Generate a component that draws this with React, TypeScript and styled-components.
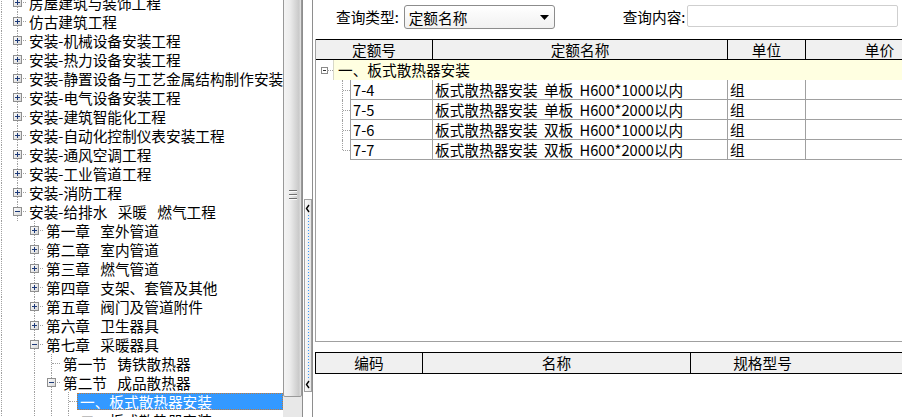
import React from 'react'
import styled, { createGlobalStyle, css } from 'styled-components'

const GlobalStyle = createGlobalStyle`
  html, body {
    margin: 0;
    padding: 0;
    background: #fff;
  }
  body {
    width: 902px;
    height: 417px;
    overflow: hidden;
    font-family: "Noto Sans CJK SC", "Liberation Sans", sans-serif;
    font-size: 14.67px;
    color: #000;
  }
`

const Window = styled.div`
  display: flex;
  width: 902px;
  height: 417px;
  overflow: hidden;
  background: #fff;
`

/* ---------- left tree ---------- */

const TreePane = styled.div`
  display: flex;
  flex: none;
  width: 302px;
  border-right: 1px solid #8e8e8e;
`

const TreeView = styled.div`
  flex: none;
  width: 283px;
  overflow: hidden;
  padding-top: 0;
`

const TreeList = styled.div`
  margin-top: -7px;
`

const TreeRow = styled.div`
  display: flex;
  height: 19px;
  white-space: nowrap;
`

const RootGuide = styled.span`
  position: relative;
  flex: none;
  width: 9px;
  &::before {
    content: '';
    position: absolute;
    left: 1px;
    top: 0;
    bottom: 0;
    border-left: 1px dotted #a0a0a0;
  }
`

const Guide = styled.span<{ $line?: boolean }>`
  position: relative;
  flex: none;
  width: 17px;
  ${({ $line }) => $line && css`
    &::before {
      content: '';
      position: absolute;
      left: 8px;
      top: 0;
      bottom: 0;
      border-left: 1px dotted #a0a0a0;
    }
  `}
`

const Connector = styled.span<{ $up?: boolean; $down?: boolean }>`
  position: relative;
  flex: none;
  width: 17px;
  &::before {
    content: '';
    position: absolute;
    left: 8px;
    top: ${({ $up }) => ($up ? '0' : '9px')};
    bottom: ${({ $down }) => ($down ? '0' : '10px')};
    border-left: 1px dotted #a0a0a0;
  }
  &::after {
    content: '';
    position: absolute;
    left: 9px;
    right: 0;
    top: 9px;
    border-top: 1px dotted #a0a0a0;
  }
`

const ExpandBox = styled.svg`
  position: absolute;
  left: 4px;
  top: 5px;
  z-index: 1;
`

const TreeLabel = styled.span<{ $selected?: boolean }>`
  flex: 1;
  height: 17px;
  margin-top: 1px;
  padding: 0 2px;
  margin-left: 1px;
  line-height: 17px;
  word-spacing: 7px;
  box-sizing: border-box;
  ${({ $selected }) => $selected && css`
    margin-left: 0;
    padding-left: 3px;
    background: #3399ff;
    color: #fff;
    outline: 1px dotted #c27a3a;
    outline-offset: -1px;
  `}
`

/* ---------- scroll bar ---------- */

const ScrollBar = styled.div`
  flex: none;
  width: 19px;
  display: flex;
  flex-direction: column;
  background: #e8e8e8;
  overflow: hidden;
`

const Thumb = styled.div`
  flex: none;
  height: 405px;
  margin-top: -8px;
  box-sizing: border-box;
  border: 1px solid #999;
  border-radius: 2px;
  background: linear-gradient(to right, #f4f4f4 0%, #ececec 35%, #d8d8d8 65%, #c9c9c9 88%, #e6e6e6 100%);
  display: flex;
  flex-direction: column;
  justify-content: center;
  align-items: center;
  gap: 2px;
`

const GripLine = styled.span`
  display: block;
  width: 8px;
  height: 2px;
  border-top: 1px solid #6f6f6f;
  border-bottom: 1px solid #fafafa;
  box-sizing: border-box;
`

/* ---------- splitter ---------- */

const Splitter = styled.div`
  flex: none;
  width: 9px;
  display: flex;
  flex-direction: column;
`

const SplitHandle = styled.div`
  margin: 199px 0 0 1px;
  width: 8px;
  height: 193px;
  box-sizing: border-box;
  border: 1px solid #a0a0a0;
  background: linear-gradient(to right, #fafafa, #e6e6e6);
`

/* ---------- right pane ---------- */

const RightPane = styled.div`
  flex: 1;
  min-width: 0;
  border-left: 1px solid #8e8e8e;
  display: flex;
  flex-direction: column;
  overflow: hidden;
`

const Toolbar = styled.div`
  flex: none;
  height: 34px;
  display: flex;
  align-items: center;
`

const FieldLabel = styled.span<{ $gap: number }>`
  margin-left: ${({ $gap }) => $gap}px;
  line-height: 20px;
  white-space: nowrap;
`

const Combo = styled.div`
  flex: none;
  width: 151px;
  height: 24px;
  margin-left: 5px;
  box-sizing: border-box;
  border: 1px solid #8c8c8c;
  border-radius: 3px;
  background: linear-gradient(#ffffff, #f1f1f1);
  display: flex;
  align-items: center;
  justify-content: space-between;
  padding: 0 5px 0 4px;
`

const SearchInput = styled.div`
  flex: none;
  width: 211px;
  height: 22px;
  margin: -2px 0 0 2px;
  box-sizing: border-box;
  border: 1px solid #cfcfcf;
  border-radius: 2px;
  background: #fff;
`

const Grid = styled.div<{ $height?: number; $framed?: boolean }>`
  margin-left: 2px;
  display: flex;
  flex-direction: column;
  overflow: hidden;
  ${({ $height }) => ($height ? css`flex: none; height: ${$height}px;` : css`flex: 1;`)}
  ${({ $framed }) => $framed && css`
    border-left: 1px solid #a0a0a0;
    border-bottom: 1px solid #a0a0a0;
  `}
  box-sizing: border-box;
`

const HeaderRow = styled.div<{ $height: number; $shift?: boolean }>`
  flex: none;
  display: flex;
  height: ${({ $height }) => $height}px;
  box-sizing: border-box;
  margin-left: ${({ $shift }) => ($shift ? '-1px' : '0')};
  border-top: 1px solid #000;
  border-bottom: 1px solid #000;
  border-left: 1px solid #000;
  background: #f0f0f0;
`

const HeadCell = styled.div<{ $w: number; $pr?: number }>`
  flex: none;
  width: ${({ $w }) => $w}px;
  box-sizing: border-box;
  border-right: 1px solid #000;
  padding-right: ${({ $pr }) => $pr ?? 0}px;
  text-align: center;
  line-height: 19px;
  white-space: nowrap;
`

const GroupRow = styled.div`
  flex: none;
  display: flex;
  height: 20px;
`

const GroupLead = styled.div`
  position: relative;
  flex: none;
  width: 17px;
  &::after {
    content: '';
    position: absolute;
    left: 11px;
    right: 0;
    top: 10px;
    border-top: 1px dotted #a0a0a0;
  }
`

const SmallBox = styled.svg`
  position: absolute;
  left: 5px;
  top: 7px;
`

const GroupCell = styled.div`
  flex: 1;
  background: #ffffe1;
  border-left: 1px solid #d8d8c8;
  padding-left: 4px;
  line-height: 19px;
  white-space: nowrap;
`

const DataRow = styled.div`
  flex: none;
  display: flex;
  height: 20px;
`

const RowLead = styled.div<{ $last?: boolean }>`
  position: relative;
  flex: none;
  width: 34px;
  &::before {
    content: '';
    position: absolute;
    left: 26px;
    top: 0;
    bottom: ${({ $last }) => ($last ? '10px' : '0')};
    border-left: 1px dotted #a0a0a0;
  }
  &::after {
    content: '';
    position: absolute;
    left: 27px;
    right: 0;
    top: 10px;
    border-top: 1px dotted #a0a0a0;
  }
`

const DataCell = styled.div<{ $w: number; $first?: boolean }>`
  flex: none;
  width: ${({ $w }) => $w}px;
  box-sizing: border-box;
  border-right: 1px solid #a0a0a0;
  border-bottom: 1px solid #a0a0a0;
  ${({ $first }) => $first && css`border-left: 1px solid #a0a0a0;`}
  padding-left: 2px;
  line-height: 19px;
  white-space: nowrap;
  word-spacing: 3px;
  overflow: hidden;
`

const GridGap = styled.div`
  flex: none;
  height: 10px;
`

/* ---------- data ---------- */

type TreeItem = {
  level: number
  text: string
  box?: '+' | '-'
  selected?: boolean
}

const TREE: TreeItem[] = [
  { level: 0, text: '房屋建筑与装饰工程', box: '+' },
  { level: 0, text: '仿古建筑工程', box: '+' },
  { level: 0, text: '安装-机械设备安装工程', box: '+' },
  { level: 0, text: '安装-热力设备安装工程', box: '+' },
  { level: 0, text: '安装-静置设备与工艺金属结构制作安装工程', box: '+' },
  { level: 0, text: '安装-电气设备安装工程', box: '+' },
  { level: 0, text: '安装-建筑智能化工程', box: '+' },
  { level: 0, text: '安装-自动化控制仪表安装工程', box: '+' },
  { level: 0, text: '安装-通风空调工程', box: '+' },
  { level: 0, text: '安装-工业管道工程', box: '+' },
  { level: 0, text: '安装-消防工程', box: '+' },
  { level: 0, text: '安装-给排水 采暖 燃气工程', box: '-' },
  { level: 1, text: '第一章 室外管道', box: '+' },
  { level: 1, text: '第二章 室内管道', box: '+' },
  { level: 1, text: '第三章 燃气管道', box: '+' },
  { level: 1, text: '第四章 支架、套管及其他', box: '+' },
  { level: 1, text: '第五章 阀门及管道附件', box: '+' },
  { level: 1, text: '第六章 卫生器具', box: '+' },
  { level: 1, text: '第七章 采暖器具', box: '-' },
  { level: 2, text: '第一节 铸铁散热器' },
  { level: 2, text: '第二节 成品散热器', box: '-' },
  { level: 3, text: '一、板式散热器安装', selected: true },
  { level: 3, text: '二、板式散热器安装' },
]

const ITEMS = [
  { code: '7-4', name: '板式散热器安装 单板 H600*1000以内', unit: '组' },
  { code: '7-5', name: '板式散热器安装 单板 H600*2000以内', unit: '组' },
  { code: '7-6', name: '板式散热器安装 双板 H600*1000以内', unit: '组' },
  { code: '7-7', name: '板式散热器安装 双板 H600*2000以内', unit: '组' },
]

/* ---------- drawings ---------- */

const PlusMinus = ({ sign }: { sign: '+' | '-' }) => (
  <ExpandBox width="9" height="9" viewBox="0 0 9 9">
    <defs>
      <linearGradient id="boxfill" x1="0" y1="0" x2="1" y2="1">
        <stop offset="0" stopColor="#ffffff" />
        <stop offset="1" stopColor="#d6d6d6" />
      </linearGradient>
    </defs>
    <rect x="0.5" y="0.5" width="8" height="8" fill="url(#boxfill)" stroke="#8f8f8f" />
    <line x1="2" y1="4.5" x2="7" y2="4.5" stroke="#1d3a78" />
    {sign === '+' && <line x1="4.5" y1="2" x2="4.5" y2="7" stroke="#1d3a78" />}
  </ExpandBox>
)

const HandleArt = () => (
  <svg width="6" height="191" viewBox="0 0 6 191">
    <polyline points="4,5 1.5,8.5 4,12" fill="none" stroke="#000" strokeWidth="1.4" />
    <line x1="3.5" y1="15" x2="3.5" y2="178" stroke="#3399ff" strokeWidth="1" strokeDasharray="1 2" />
    <polyline points="4,181 1.5,184.5 4,188" fill="none" stroke="#000" strokeWidth="1.4" />
  </svg>
)

const DropArrow = () => (
  <svg width="9" height="5" viewBox="0 0 9 5">
    <polygon points="0,0 9,0 4.5,5" fill="#000" />
  </svg>
)

/* ---------- parts ---------- */

const TreeNode = ({ item }: { item: TreeItem }) => (
  <TreeRow>
    <RootGuide />
    {Array.from({ length: item.level }, (_, i) => (
      <Guide key={i} $line={i > 0} />
    ))}
    <Connector $up $down>
      {item.box && <PlusMinus sign={item.box} />}
    </Connector>
    <TreeLabel $selected={item.selected}>{item.text}</TreeLabel>
  </TreeRow>
)

const QuotaGrid = () => (
  <Grid $height={303} $framed>
    <HeaderRow $height={21} $shift>
      <HeadCell $w={117}>定额号</HeadCell>
      <HeadCell $w={295}>定额名称</HeadCell>
      <HeadCell $w={78}>单位</HeadCell>
      <HeadCell $w={148}>单价</HeadCell>
    </HeaderRow>
    <GroupRow>
      <GroupLead>
        <SmallBox width="7" height="7" viewBox="0 0 7 7">
          <rect x="0.5" y="0.5" width="6" height="6" fill="#fff" stroke="#8a8a8a" />
          <line x1="2" y1="3.5" x2="5" y2="3.5" stroke="#333" />
        </SmallBox>
      </GroupLead>
      <GroupCell>一、板式散热器安装</GroupCell>
    </GroupRow>
    {ITEMS.map((it, i) => (
      <DataRow key={it.code}>
        <RowLead $last={i === ITEMS.length - 1} />
        <DataCell $w={83} $first>{it.code}</DataCell>
        <DataCell $w={295}>{it.name}</DataCell>
        <DataCell $w={78}>{it.unit}</DataCell>
        <DataCell $w={148} />
      </DataRow>
    ))}
  </Grid>
)

const MaterialGrid = () => (
  <Grid>
    <HeaderRow $height={22}>
      <HeadCell $w={107}>编码</HeadCell>
      <HeadCell $w={268}>名称</HeadCell>
      <HeadCell $w={230} $pr={86}>规格型号</HeadCell>
    </HeaderRow>
  </Grid>
)

export default function App() {
  return (
    <>
      <GlobalStyle />
      <Window>
        <TreePane>
          <TreeView>
            <TreeList>
              {TREE.map((item, i) => (
                <TreeNode key={i} item={item} />
              ))}
            </TreeList>
          </TreeView>
          <ScrollBar>
            <Thumb>
              <GripLine />
              <GripLine />
              <GripLine />
            </Thumb>
          </ScrollBar>
        </TreePane>
        <Splitter>
          <SplitHandle>
            <HandleArt />
          </SplitHandle>
        </Splitter>
        <RightPane>
          <Toolbar>
            <FieldLabel $gap={23}>查询类型:</FieldLabel>
            <Combo>
              <span>定额名称</span>
              <DropArrow />
            </Combo>
            <FieldLabel $gap={68}>查询内容:</FieldLabel>
            <SearchInput />
          </Toolbar>
          <GridGapTop />
          <QuotaGrid />
          <GridGap />
          <MaterialGrid />
        </RightPane>
      </Window>
    </>
  )
}

const GridGapTop = styled.div`
  flex: none;
  height: 5px;
`
